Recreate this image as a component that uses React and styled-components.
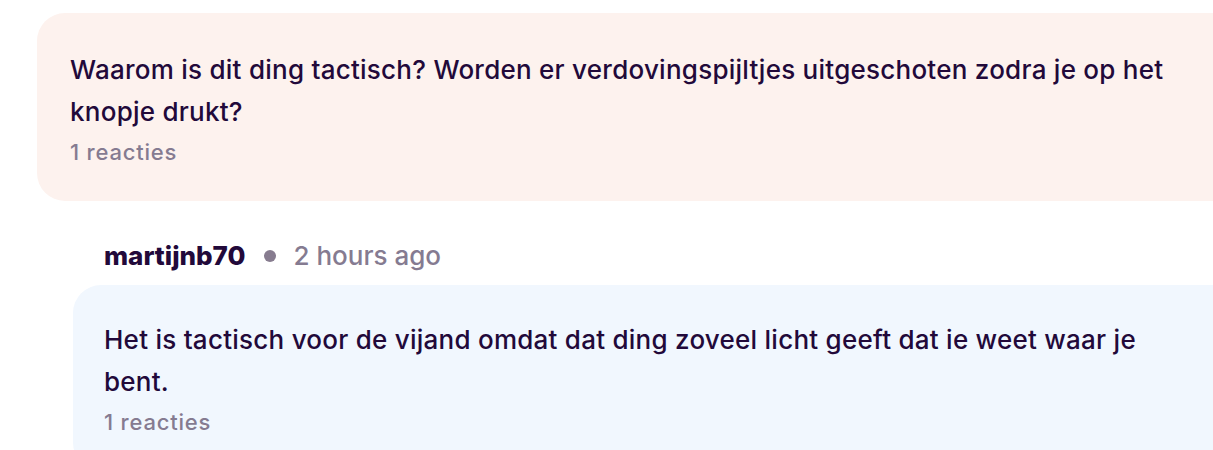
import React from "react";
import styled, { createGlobalStyle } from "styled-components";

const Global = createGlobalStyle`
  html, body { margin: 0; padding: 0; background: #ffffff; overflow: hidden; }
  body { font-family: Inter, "Noto Sans", sans-serif; color: #22093a; }
`;

const Page = styled.div`
  width: 1245px;
  padding: 13px 0 0 37px;
  box-sizing: border-box;
  display: flex;
  flex-direction: column;
`;

const Card = styled.div`
  background: ${(p) => (p.$tone === "blue" ? "#f1f7fe" : "#fdf2ee")};
  border-radius: 28px;
  padding: ${(p) => (p.$tone === "blue" ? "34px 50px 32px 31px" : "36px 50px 32px 33px")};
  display: flex;
  flex-direction: column;
`;

const Body = styled.p`
  margin: 0;
  font-size: 26px;
  font-weight: 500;
  line-height: 42px;
  letter-spacing: 0.25px;
  color: #22093a;
`;

const Meta = styled.span`
  margin-top: 3px;
  font-size: 22px;
  line-height: 33px;
  font-weight: 500;
  letter-spacing: 0.8px;
  color: #857b91;
`;

const Reply = styled.div`
  margin-left: 36px;
  margin-top: 39px;
  display: flex;
  flex-direction: column;
  gap: 13px;
`;

const Header = styled.div`
  display: flex;
  align-items: center;
  gap: 18px;
  padding-left: 31px;
  line-height: 32px;
`;

const Author = styled.span`
  font-size: 26px;
  font-weight: 800;
  color: #22093a;
`;

const Dot = styled.span`
  width: 12px;
  height: 12px;
  border-radius: 50%;
  background: #877c8f;
`;

const Time = styled.span`
  font-size: 26px;
  font-weight: 500;
  color: #857b91;
`;

export default function App() {
  return (
    <>
      <Global />
      <Page>
        <Card>
          <Body>
            Waarom is dit ding tactisch? Worden er verdovingspijltjes uitgeschoten zodra je op het
            knopje drukt?
          </Body>
          <Meta>1 reacties</Meta>
        </Card>
        <Reply>
          <Header>
            <Author>martijnb70</Author>
            <Dot />
            <Time>2 hours ago</Time>
          </Header>
          <Card $tone="blue">
            <Body>
              Het is tactisch voor de vijand omdat dat ding zoveel licht geeft dat ie weet waar je
              bent.
            </Body>
            <Meta>1 reacties</Meta>
          </Card>
        </Reply>
      </Page>
    </>
  );
}
